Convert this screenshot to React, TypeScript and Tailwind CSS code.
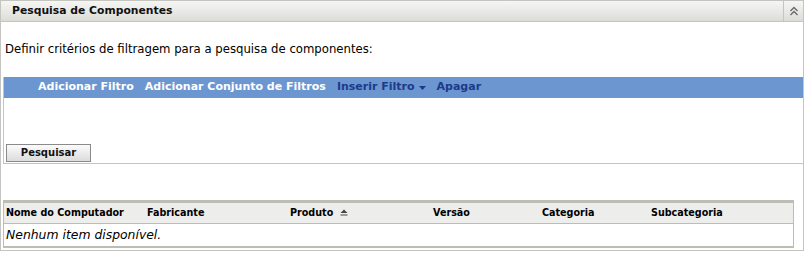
export default function App() {
  const cols = [
    { label: 'Nome do Computador', w: 'w-[141px]' },
    { label: 'Fabricante', w: 'w-[143px]' },
    { label: 'Produto', w: 'w-[143px]', sorted: true },
    { label: 'Versão', w: 'w-[109px]' },
    { label: 'Categoria', w: 'w-[109px]' },
    { label: 'Subcategoria', w: 'flex-1' },
  ];

  return (
    <div className="w-[809px] h-[257px] bg-white font-['DejaVu_Sans',sans-serif] text-[11px] text-black">
      <div className="w-[804px] h-[251px] border border-[#c4c4c0] flex flex-col">
        {/* Header */}
        <div className="h-[21px] flex border-b border-[#c4c4c0] bg-gradient-to-b from-[#f6f6f4] to-[#dcdcd7]">
          <div className="flex-1 pl-[11px] flex items-center font-bold text-[10.8px] text-[#111]">
            Pesquisa de Componentes
          </div>
          <div className="w-[20px] border-l border-[#c4c4c0] flex items-center justify-center">
            <svg width="10" height="10" viewBox="0 0 10 10" fill="none" stroke="#6b6b6b" strokeWidth="1.4">
              <path d="M1.5 5 L5 1.5 L8.5 5" />
              <path d="M1.5 9 L5 5.5 L8.5 9" />
            </svg>
          </div>
        </div>

        <div className="flex-1 flex flex-col pl-[2px]">
          <p className="pt-[20px] pl-[2px] h-[55px] leading-[14px] text-[11.7px]">
            Definir critérios de filtragem para a pesquisa de componentes:
          </p>

          {/* Filter box */}
          <div className="h-[87px] border-l border-b border-[#c4c4c0] flex flex-col">
            <div className="h-[21px] bg-[#6b96d0] flex items-center pl-[34px] gap-[11px] font-bold text-[11px]">
              <span className="text-white">Adicionar Filtro</span>
              <span className="text-white">Adicionar Conjunto de Filtros</span>
              <span className="text-[#1d3a8a] flex items-center gap-[4px]">
                Inserir Filtro
                <svg width="7" height="4" viewBox="0 0 7 4">
                  <path d="M0 0 H7 L3.5 4 Z" fill="#1d3a8a" />
                </svg>
              </span>
              <span className="text-[#1d3a8a]">Apagar</span>
            </div>
            <div className="flex-1 flex items-end pl-[2px] pb-[1px]">
              <button className="w-[85px] h-[18px] border border-[#8a8a8a] bg-gradient-to-b from-[#fbfbfb] to-[#dcdcdc] text-[10px] font-bold text-[#111] leading-none">
                Pesquisar
              </button>
            </div>
          </div>

          {/* Table */}
          <div className="mt-[36px] w-[791px] border-t-[3px] border-b-[2px] border-l border-r border-[#bcbdb5]">
            <div className="h-[21px] flex items-center bg-[#ededec] border-b border-[#bcbdb5] pl-[2px] font-bold text-[9.6px]">
              {cols.map((c) => (
                <div key={c.label} className={`${c.w} flex items-center gap-[7px]`}>
                  <span>{c.label}</span>
                  {c.sorted && (
                    <svg width="8" height="7" viewBox="0 0 8 7">
                      <path d="M0.5 4 L4 0.5 L7.5 4 Z" fill="#444" />
                      <rect x="0.5" y="5.5" width="7" height="1" fill="#444" />
                    </svg>
                  )}
                </div>
              ))}
            </div>
            <div className="h-[22px] flex items-center pl-[2px] italic text-[12.4px]">Nenhum item disponível.</div>
          </div>
        </div>
      </div>
    </div>
  );
}
